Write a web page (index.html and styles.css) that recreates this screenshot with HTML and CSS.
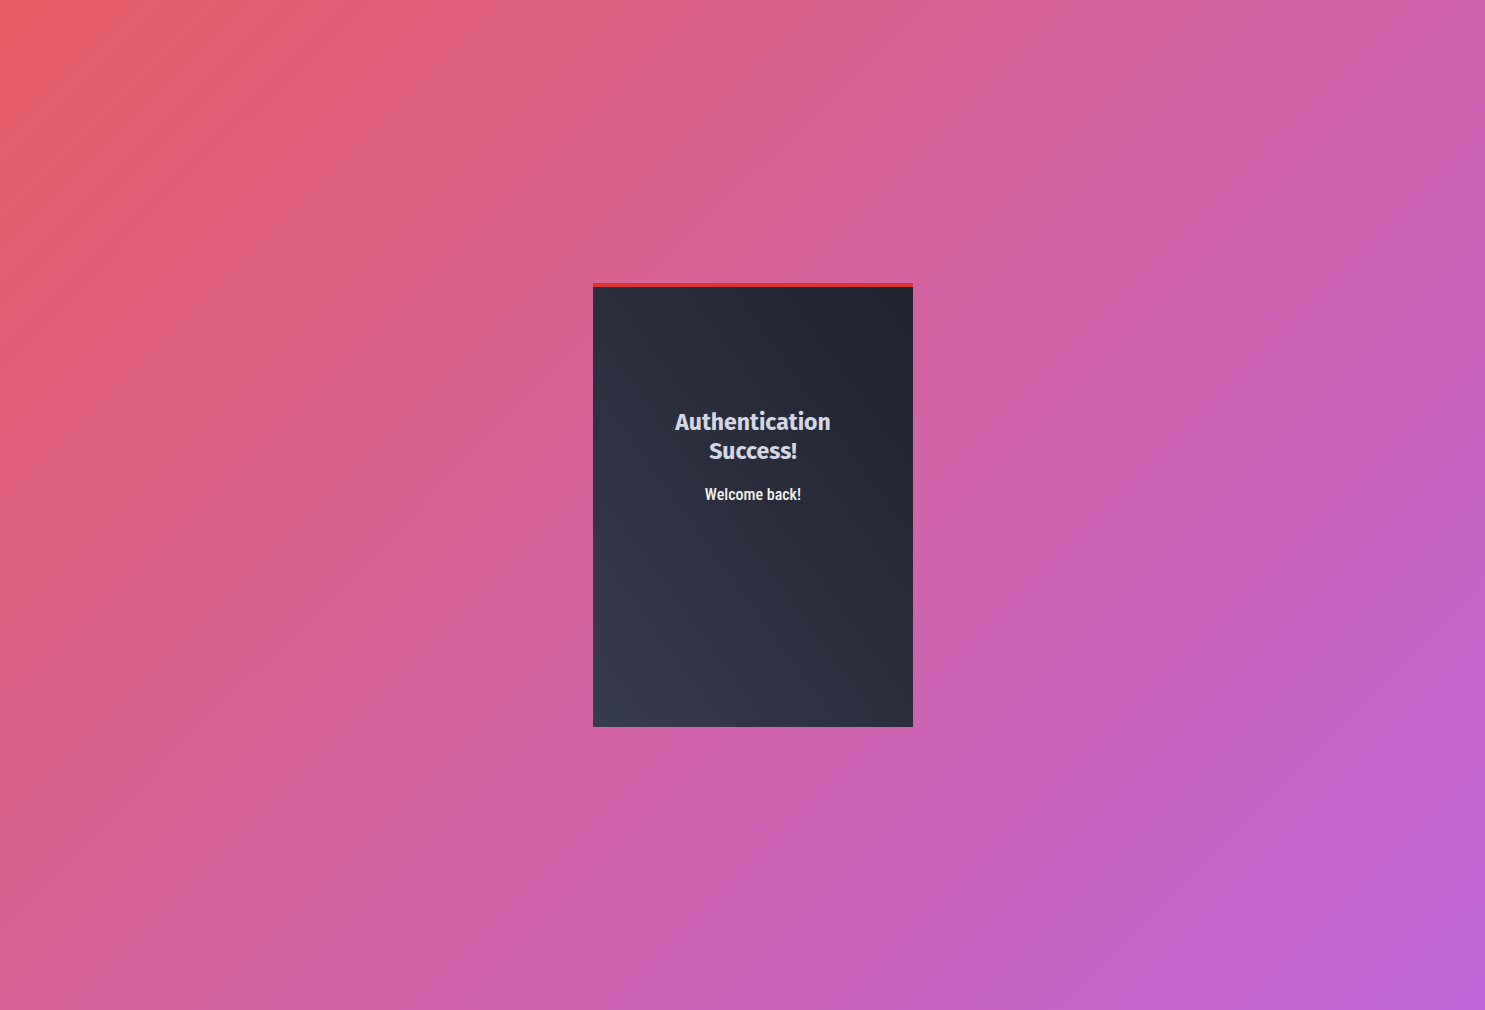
FILE: index.html
```html
<!DOCTYPE html>
<html>
<head>
<meta charset="utf-8">
<link rel="stylesheet" href="styles.css">
</head>
<body>
<div class="page">
  <div class="card">
    <h1 class="title">Authentication<br>Success!</h1>
    <p class="sub">Welcome back!</p>
  </div>
</div>
</body>
</html>
```
FILE: styles.css
```css
html, body { margin: 0; padding: 0; height: 100%; }
body {
  background: linear-gradient(135deg, #e75e64 0%, #d5629c 45%, #c067da 100%);
  font-family: "Open Sans", "Liberation Sans", sans-serif;
}
.page {
  height: 100%;
  display: flex;
  align-items: center;
  justify-content: center;
  padding-left: 21px;
  box-sizing: border-box;
}
.card {
  width: 320px;
  height: 444px;
  border-top: 4px solid #dc3232;
  background: linear-gradient(to top right, #383c4f 0%, #2a2e3d 50%, #1f2330 100%);
  display: flex;
  flex-direction: column;
  align-items: center;
  padding-top: 121px;
  box-sizing: border-box;
}
.title {
  margin: 0;
  font-family: "Fira Sans", "Open Sans", sans-serif;
  font-size: 23px;
  line-height: 29px;
  font-weight: 700;
  color: #d4d6e4;
  text-align: center;
}
.sub {
  margin: 19px 0 0;
  font-family: "Roboto", sans-serif;
  font-stretch: condensed;
  font-size: 16px;
  font-weight: 500;
  color: #f2f2f2;
  letter-spacing: 0;
}
```
